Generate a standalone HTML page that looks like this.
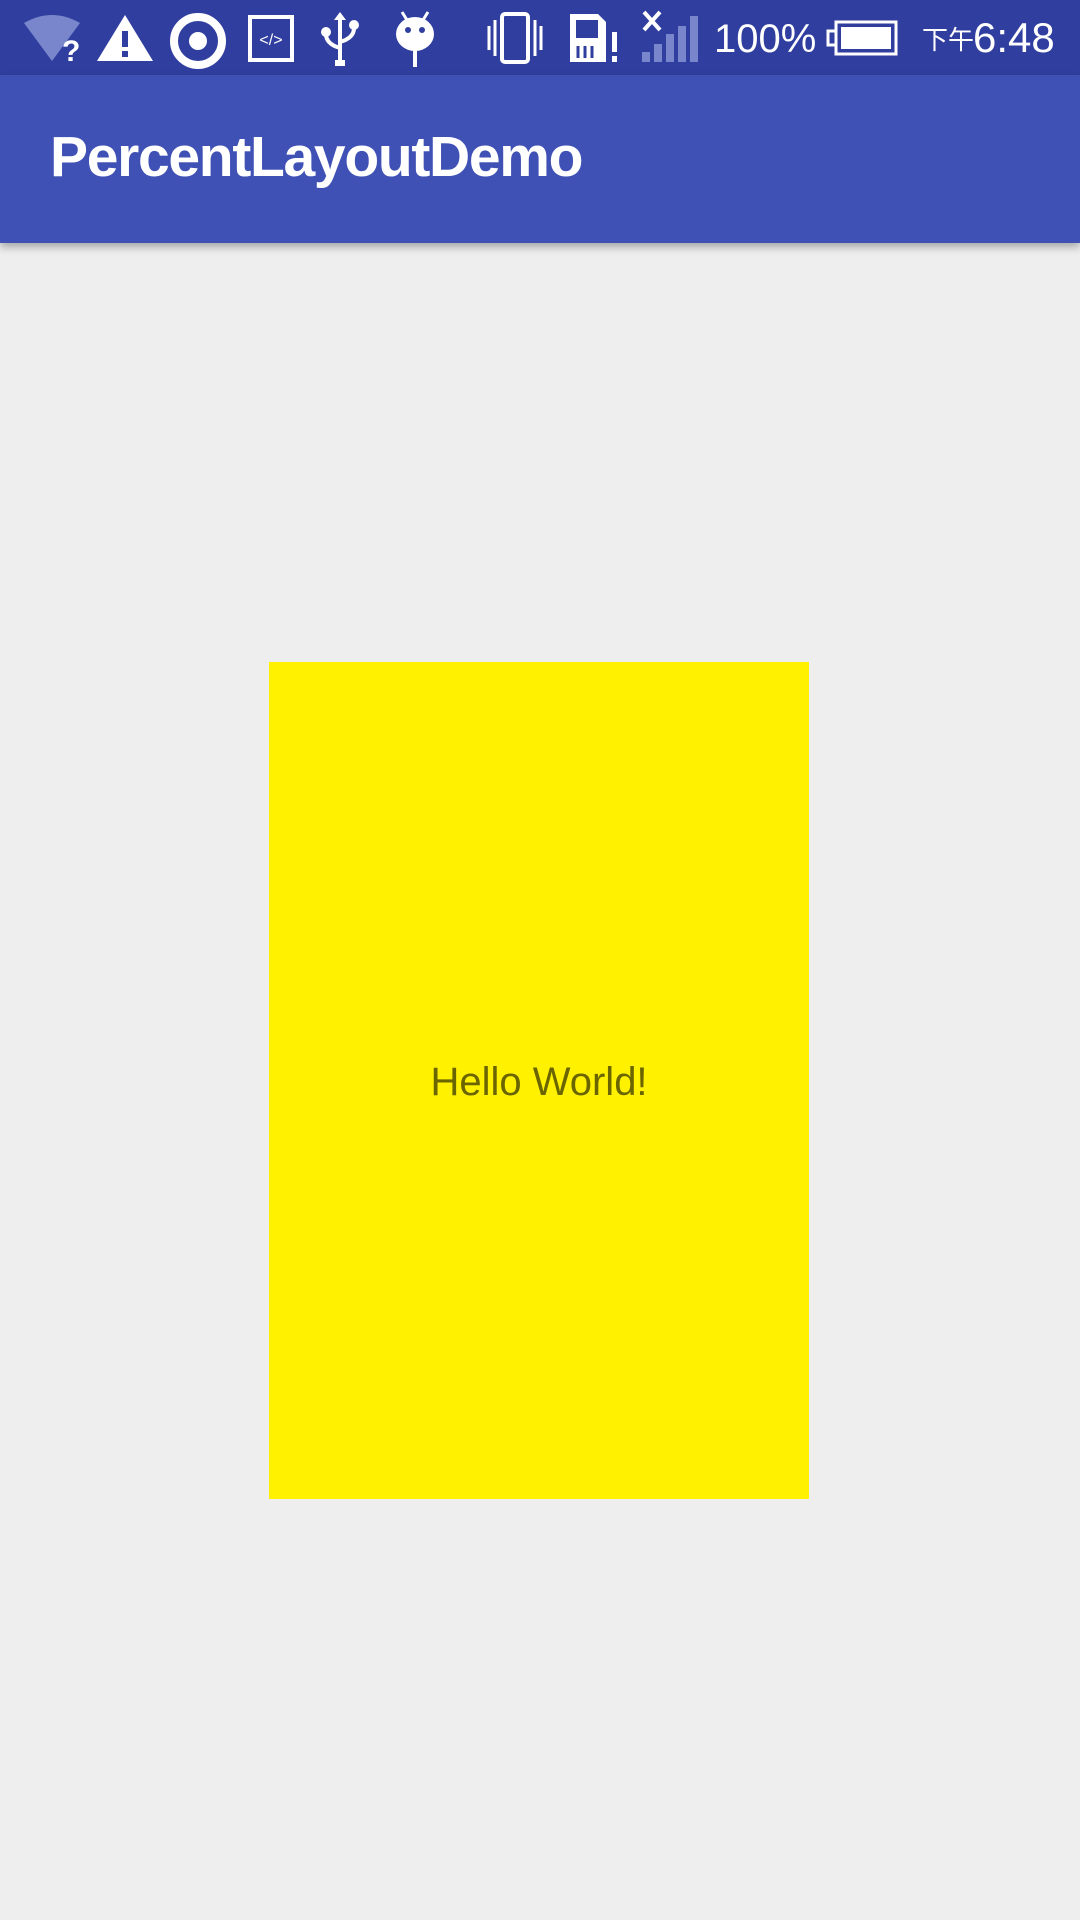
<!DOCTYPE html>
<html><head><meta charset="utf-8"><style>
body{margin:0;width:1080px;height:1920px;background:#eeeeee;position:relative;overflow:hidden;font-family:"Liberation Sans","Noto Sans CJK SC",sans-serif}
.sb{position:absolute;left:0;top:0;width:1080px;height:75px;background:#303f9f}
.ab{position:absolute;left:0;top:75px;width:1080px;height:168px;background:#3f51b5;box-shadow:0 4px 8px rgba(0,0,0,.3)}
.title{position:absolute;left:50px;top:129px;color:#fff;font-size:57px;font-weight:bold;letter-spacing:-1.3px;line-height:1}
.box{position:absolute;left:269px;top:662px;width:540px;height:837px;background:#fff100}
.hw{position:absolute;left:269px;width:540px;top:1060px;text-align:center;color:#6b6500;font-size:40px}
.st{position:absolute;color:#fff;line-height:1}
svg{position:absolute}
</style></head><body>
<div class="sb">
<svg style="left:22px;top:13px" width="64" height="50" viewBox="0 0 64 50"><path d="M2 10 Q30 -6 58 10 L30 48 Z" fill="#7986cb"/><text x="40" y="48" font-size="30" font-weight="bold" fill="#fff" font-family="Liberation Sans">?</text></svg>
<svg style="left:96px;top:13px" width="58" height="50" viewBox="0 0 58 50"><path d="M29 2 L57 48 L1 48 Z" fill="#fff"/><rect x="26" y="18" width="6" height="16" fill="#303f9f"/><rect x="26" y="38" width="6" height="6" fill="#303f9f"/></svg>
<svg style="left:169px;top:12px" width="58" height="58" viewBox="0 0 58 58"><circle cx="29" cy="29" r="24" fill="none" stroke="#fff" stroke-width="8"/><circle cx="29" cy="29" r="9" fill="#fff"/></svg>
<svg style="left:248px;top:15px" width="46" height="47" viewBox="0 0 46 47"><rect x="2" y="2" width="42" height="43" fill="none" stroke="#fff" stroke-width="4"/><text x="23" y="30" font-size="16" fill="#fff" text-anchor="middle" font-family="Liberation Sans">&lt;/&gt;</text></svg>
<svg style="left:318px;top:12px" width="48" height="55" viewBox="0 0 48 55"><path d="M22 4 V50 M22 36 Q8 32 8 22 M22 30 Q36 26 36 16" stroke="#fff" stroke-width="4" fill="none"/><circle cx="8" cy="20" r="5" fill="#fff"/><circle cx="36" cy="13" r="5" fill="#fff"/><path d="M16 8 L22 0 L28 8Z" fill="#fff"/><rect x="17" y="48" width="10" height="6" fill="#fff"/></svg>
<svg style="left:394px;top:10px" width="42" height="58" viewBox="0 0 42 58"><path d="M8 2 L13 10 M34 2 L29 10" stroke="#fff" stroke-width="3"/><ellipse cx="21" cy="24" rx="19" ry="17" fill="#fff"/><circle cx="14" cy="20" r="3" fill="#303f9f"/><circle cx="28" cy="20" r="3" fill="#303f9f"/><rect x="19" y="40" width="4" height="17" fill="#fff"/></svg>
<svg style="left:486px;top:12px" width="58" height="52" viewBox="0 0 58 52"><rect x="16" y="2" width="26" height="48" rx="3" fill="none" stroke="#fff" stroke-width="4"/><path d="M3 14V38M9 8V44M49 8V44M55 14V38" stroke="#fff" stroke-width="3"/></svg>
<svg style="left:568px;top:12px" width="54" height="52" viewBox="0 0 54 52"><path d="M2 2H30L38 10V50H2Z" fill="#fff"/><rect x="8" y="8" width="22" height="18" fill="#303f9f"/><path d="M10 34V46M17 34V46M24 34V46" stroke="#303f9f" stroke-width="3"/><rect x="44" y="20" width="5" height="20" fill="#fff"/><rect x="44" y="44" width="5" height="6" fill="#fff"/></svg>
<svg style="left:640px;top:10px" width="60" height="54" viewBox="0 0 60 54"><path d="M4 2L20 20M20 2L4 20" stroke="#fff" stroke-width="4"/><rect x="2" y="42" width="8" height="10" fill="#7986cb"/><rect x="14" y="34" width="8" height="18" fill="#7986cb"/><rect x="26" y="24" width="8" height="28" fill="#7986cb"/><rect x="38" y="16" width="8" height="36" fill="#7986cb"/><rect x="50" y="6" width="8" height="46" fill="#7986cb"/></svg>
<div class="st" style="left:714px;top:19px;font-size:40px">100%</div>
<svg style="left:826px;top:20px" width="72" height="36" viewBox="0 0 72 36"><rect x="10" y="2" width="60" height="32" fill="none" stroke="#fff" stroke-width="3"/><rect x="15" y="7" width="50" height="22" fill="#fff"/><rect x="2" y="11" width="8" height="14" fill="none" stroke="#fff" stroke-width="3"/></svg>
<div class="st" style="left:922px;top:27px;font-size:26px">下午</div>
<div class="st" style="left:973px;top:17px;font-size:42px">6:48</div>
</div>
<div class="ab"></div>
<div class="title">PercentLayoutDemo</div>
<div class="box"></div>
<div class="hw">Hello World!</div>
</body></html>
